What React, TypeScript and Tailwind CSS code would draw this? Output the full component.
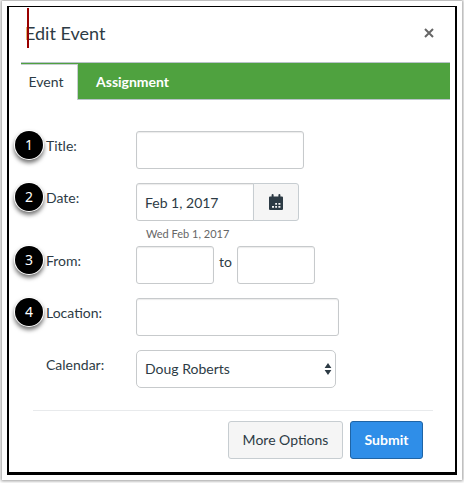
import React, { useState } from 'react';

const inputClass =
  'h-[38px] rounded-[3px] border border-[#c7cacc] bg-white px-2 text-sm text-[#2d3b45] shadow-[inset_0_1px_1px_rgba(0,0,0,0.08)] outline-none';

function StepBadge({ step }: { step: number }) {
  return (
    <span className="flex h-7 w-7 items-center justify-center rounded-full bg-black font-['Noto_Sans',sans-serif] text-sm text-white shadow-[0_0_0_1px_#ffffff,0_3px_4px_1px_rgba(0,0,0,0.55)]">
      {step}
    </span>
  );
}

function FormRow({
  step,
  label,
  htmlFor,
  className = 'mb-[14px]',
  children,
}: {
  step?: number;
  label: string;
  htmlFor: string;
  className?: string;
  children: React.ReactNode;
}) {
  return (
    <div className={`flex items-start ${className}`}>
      <div className="w-[31px] shrink-0">{step && <StepBadge step={step} />}</div>
      <label htmlFor={htmlFor} className="w-[90px] shrink-0 pt-[5px] text-sm leading-5">
        {label}
      </label>
      <div className="min-w-0">{children}</div>
    </div>
  );
}

function CalendarIcon() {
  return (
    <svg width="14" height="16" viewBox="0 0 14 16" aria-hidden="true">
      <path
        fill="#2d3b45"
        d="M2.6 1a1 1 0 0 1 2 0v1.4h4.8V1a1 1 0 0 1 2 0v1.4H13a1 1 0 0 1 1 1V15a1 1 0 0 1-1 1H1a1 1 0 0 1-1-1V3.400a1 1 0 0 1 1-1h1.600z"
      />
      <path
        fill="#f5f5f5"
        d="M6.200 9H8v1.800H6.200zM9.400 9h2v1.800h-2zM3 12h2v1.800H3zM6.200 12H8v1.800H6.200zM9.400 12h2v1.800h-2z"
      />
    </svg>
  );
}

export default function App() {
  const [title, setTitle] = useState('');
  const [date, setDate] = useState('Feb 1, 2017');
  const [from, setFrom] = useState('');
  const [to, setTo] = useState('');
  const [location, setLocation] = useState('');

  return (
    <div className="bg-white px-[2px] pt-px pb-[3px] font-[Lato,sans-serif] text-[#2d3b45]">
      <div className="bg-white px-[5px] pt-[5px] pb-[5px] shadow-[0_0_3px_1px_rgba(0,0,0,0.4)]">
        <div className="border-x-2 border-t border-b-[3px] border-black px-3 pb-[13px]">
          {/* Header */}
          <header className="relative flex h-[55px] items-center justify-between pr-[9px] pb-1 pl-1">
            <h1 className="text-lg leading-6">Edit Event</h1>
            <span className="absolute top-px left-[6px] h-10 w-[2px] bg-[#990000]" />
            <button type="button" aria-label="Close" className="flex h-[10px] w-[10px] items-center">
              <svg width="10" height="10" viewBox="0 0 10 10" aria-hidden="true">
                <path d="M1 1l8 8M9 1L1 9" stroke="#666666" strokeWidth="2" />
              </svg>
            </button>
          </header>

          {/* Tabs */}
          <div
            role="tablist"
            className="mr-[-7px] flex h-[38px] border-y border-[#b9c3c9] bg-[#4fa23f]"
          >
            <button
              type="button"
              role="tab"
              aria-selected="true"
              className="mt-px -mb-px w-[57px] border-t border-r border-[#c7cdd1] bg-white pr-[6px] pb-[2px] text-sm"
            >
              Event
            </button>
            <button
              type="button"
              role="tab"
              aria-selected="false"
              className="px-[18px] pt-[2px] text-sm font-bold text-white"
            >
              Assignment
            </button>
          </div>

          <form onSubmit={(e) => e.preventDefault()}>
            {/* Fields */}
            <div className="-ml-[6px] pt-[31px]">
              <FormRow step={1} label="Title:" htmlFor="title">
                <input
                  id="title"
                  value={title}
                  onChange={(e) => setTitle(e.target.value)}
                  className={`w-[168px] ${inputClass}`}
                />
              </FormRow>

              <FormRow step={2} label="Date:" htmlFor="date" className="mb-1">
                <div className="flex">
                  <input
                    id="date"
                    value={date}
                    onChange={(e) => setDate(e.target.value)}
                    className={`w-[118px] rounded-r-none ${inputClass}`}
                  />
                  <button
                    type="button"
                    aria-label="Choose date"
                    className="-ml-px flex h-[38px] w-[46px] items-center justify-center rounded-r-[3px] border border-[#c7cdd1] bg-[#f5f5f5]"
                  >
                    <CalendarIcon />
                  </button>
                </div>
                <p className="mt-[5px] pl-[10px] text-[11px] leading-4 text-[#666666]">
                  Wed Feb 1, 2017
                </p>
              </FormRow>

              <FormRow step={3} label="From:" htmlFor="from">
                <div className="flex items-start">
                  <input
                    id="from"
                    value={from}
                    onChange={(e) => setFrom(e.target.value)}
                    className={`w-[78px] ${inputClass}`}
                  />
                  <label htmlFor="to" className="w-[23px] pt-[6px] text-center text-sm leading-5">
                    to
                  </label>
                  <input
                    id="to"
                    value={to}
                    onChange={(e) => setTo(e.target.value)}
                    className={`w-[78px] ${inputClass}`}
                  />
                </div>
              </FormRow>

              <FormRow step={4} label="Location:" htmlFor="location">
                <input
                  id="location"
                  value={location}
                  onChange={(e) => setLocation(e.target.value)}
                  className={`w-[203px] ${inputClass}`}
                />
              </FormRow>

              <FormRow label="Calendar:" htmlFor="calendar" className="mb-0">
                <div className="relative">
                  <select
                    id="calendar"
                    className="h-[38px] w-[200px] appearance-none rounded-[5px] border border-[#c7cacc] bg-white px-2 text-sm"
                  >
                    <option>Doug Roberts</option>
                  </select>
                  <svg
                    className="pointer-events-none absolute top-3 right-1"
                    width="8"
                    height="14"
                    viewBox="0 0 8 14"
                    aria-hidden="true"
                  >
                    <path d="M4 1l3.4 5H.6zM4 13L.6 8h6.8z" fill="#2d3b45" />
                  </svg>
                </div>
              </FormRow>
            </div>

            {/* Footer */}
            <div className="mt-[22px] mr-[10px] ml-3 flex justify-end gap-[7px] border-t border-[#e8eaec] pt-[10px] pr-[10px]">
              <button
                type="button"
                className="h-[38px] w-[115px] rounded-[3px] border border-[#c7cdd1] bg-[#f5f5f5] text-sm"
              >
                More Options
              </button>
              <button
                type="submit"
                className="h-[38px] w-[73px] rounded-[3px] border border-[#1f64a5] bg-[#2f8ee8] text-sm font-bold text-white"
              >
                Submit
              </button>
            </div>
          </form>
        </div>
      </div>
    </div>
  );
}
